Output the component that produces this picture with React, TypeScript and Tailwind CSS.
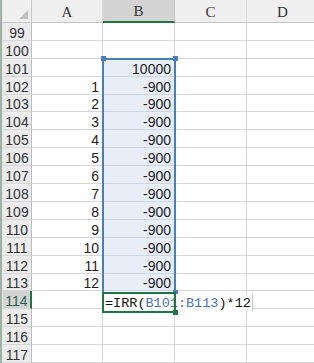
const COLS = ['A', 'B', 'C', 'D'];
const COL_W = ['w-[71px]', 'w-[72px]', 'w-[72px]', 'w-[72px]'];
const ROWS = Array.from({ length: 19 }, (_, i) => 99 + i);

function cellValue(row: number, col: number) {
  if (col === 0 && row >= 102 && row <= 113) return String(row - 101);
  if (col === 1 && row === 101) return '10000';
  if (col === 1 && row >= 102 && row <= 113) return '-900';
  return '';
}

export default function App() {
  return (
    <div className="relative w-[314px] h-[363px] overflow-hidden bg-white flex font-['Liberation_Sans',Arial,sans-serif] text-[14px] text-[#222]">
      {/* window edge */}
      <div className="w-[3px] shrink-0 flex">
        <div className="w-[2px] bg-[#9db3a6]" />
        <div className="w-[1px] bg-[#e4e4e4]" />
      </div>

      <div className="flex flex-col shrink-0">
        {/* column headers */}
        <div className="flex h-[23px]">
          <div className="relative w-[29px] shrink-0 bg-[#efefef] border-r border-b border-[#c6c6c6]">
            <div className="absolute right-[3px] bottom-[3px] w-0 h-0 border-l-[9px] border-l-transparent border-b-[9px] border-b-[#c2c2c2]" />
          </div>
          {COLS.map((c, i) => (
            <div
              key={c}
              className={`${COL_W[i]} shrink-0 flex items-end justify-center pb-[1px] font-['Liberation_Serif',serif] text-[15px] leading-[18px] text-[#333] border-r ${
                i === 1
                  ? 'bg-[#d3d3d3] border-b-2 border-b-[#217346] border-r-[#c6c6c6]'
                  : 'bg-[#efefef] border-b border-b-[#c6c6c6] border-r-[#dadada]'
              }`}
            >
              {c}
            </div>
          ))}
        </div>

        {/* rows */}
        {ROWS.map((r) => (
          <div key={r} className="flex h-[18px]">
            <div
              className={`w-[29px] shrink-0 flex items-end justify-center leading-[14px] border-b border-[#d6d6d6] ${
                r === 114
                  ? 'bg-[#d3d3d3] border-r-2 border-r-[#217346] text-[#2a6249]'
                  : 'bg-[#ececec] border-r border-r-[#bcbcbc] text-[#333]'
              }`}
            >
              {r}
            </div>
            {COLS.map((c, i) => {
              const selected = i === 1 && r >= 101 && r <= 113;
              return (
                <div
                  key={c}
                  className={`${COL_W[i]} shrink-0 flex items-end justify-end pr-[3px] leading-[14px] border-r border-b ${
                    selected ? 'bg-[#e8eef8] border-[#cdd5e3]' : 'border-[#d6d6d6]'
                  }`}
                >
                  {cellValue(r, i)}
                </div>
              );
            })}
          </div>
        ))}
      </div>

      {/* selection B101:B113 */}
      <div className="absolute left-[102px] top-[58px] w-[74px] h-[236px] border-2 border-[#4a7ebb]" />
      <div className="absolute left-[101px] top-[56px] w-[5px] h-[5px] bg-[#4a7ebb]" />
      <div className="absolute left-[173px] top-[56px] w-[5px] h-[5px] bg-[#4a7ebb]" />
      <div className="absolute left-[173px] top-[290px] w-[5px] h-[5px] bg-[#4a7ebb]" />

      {/* formula being typed in B114 */}
      <div className="absolute left-[104px] top-[294px] w-[149px] h-[17px] bg-white border-r border-[#c8c8c8] flex items-end pl-[1px] font-['Liberation_Mono',monospace] text-[13.5px] leading-[15px] text-[#111] whitespace-nowrap">
        =IRR(<span className="text-[#4a72b8]">B101:B113</span>)*12
      </div>
      <div className="absolute left-[102px] top-[292px] w-[74px] h-[21px] border-2 border-[#217346]" />
      <div className="absolute left-[173px] top-[310px] w-[5px] h-[5px] bg-[#217346]" />
    </div>
  );
}
